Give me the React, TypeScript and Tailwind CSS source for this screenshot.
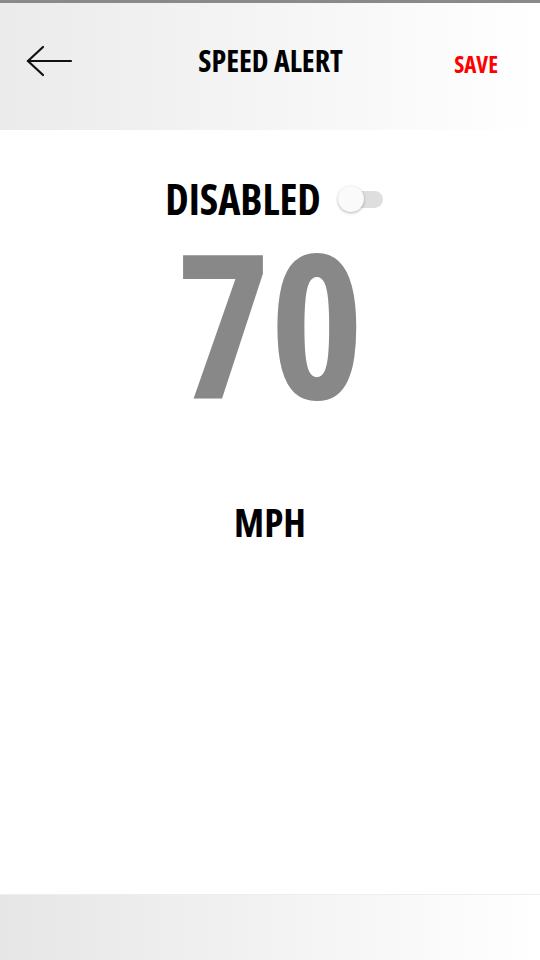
const font = { fontFamily: '"Open Sans", "Liberation Sans Narrow", sans-serif', fontStretch: "75%" };

const Toggle = () => (
  <div className="relative w-[45px] h-[27px]">
    <div className="absolute left-[8px] top-[5px] w-[37px] h-[17px] rounded-full bg-[#dedede]" />
    <div className="absolute left-0 top-0 w-[26px] h-[26px] rounded-full bg-[#fafafa] shadow-[0_1px_3px_rgba(0,0,0,0.3)]" />
  </div>
);

export default function App() {
  return (
    <div className="w-[540px] h-[960px] flex flex-col bg-white" style={font}>
      <div className="h-[3px] bg-[#8a8a8a]" />
      <header className="h-[127px] flex items-center px-[26px] bg-gradient-to-r from-[#ebebeb] to-white">
        <button className="w-[48px] h-[32px] mt-[-12px]">
          <svg width="48" height="32" viewBox="0 0 48 32" fill="none" stroke="#111" strokeWidth="2.2" strokeLinecap="round">
            <path d="M2 16H45" />
            <path d="M17 2L2 16L17 30" />
          </svg>
        </button>
        <h1 className="flex-1 text-center text-[30px] font-bold text-black mt-[-12px] ml-[13px]">SPEED ALERT</h1>
        <button className="text-[23px] font-bold text-[#ff0000] mt-[-4px] mr-[16px]">SAVE</button>
      </header>
      <main className="flex-1 flex flex-col items-center">
        <div className="flex items-center gap-[17px] mt-[48px] ml-[8px]">
          <span className="text-[42px] font-bold text-black leading-none">DISABLED</span>
          <Toggle />
        </div>
        <div className="text-[200px] font-bold text-[#888888] leading-[0.8] mt-[22px]">70</div>
        <div className="text-[39px] font-bold text-black leading-none mt-[100px]">MPH</div>
      </main>
      <footer className="h-[66px] bg-gradient-to-r from-[#e6e6e6] to-white border-t border-[#eeeeee]" />
    </div>
  );
}
